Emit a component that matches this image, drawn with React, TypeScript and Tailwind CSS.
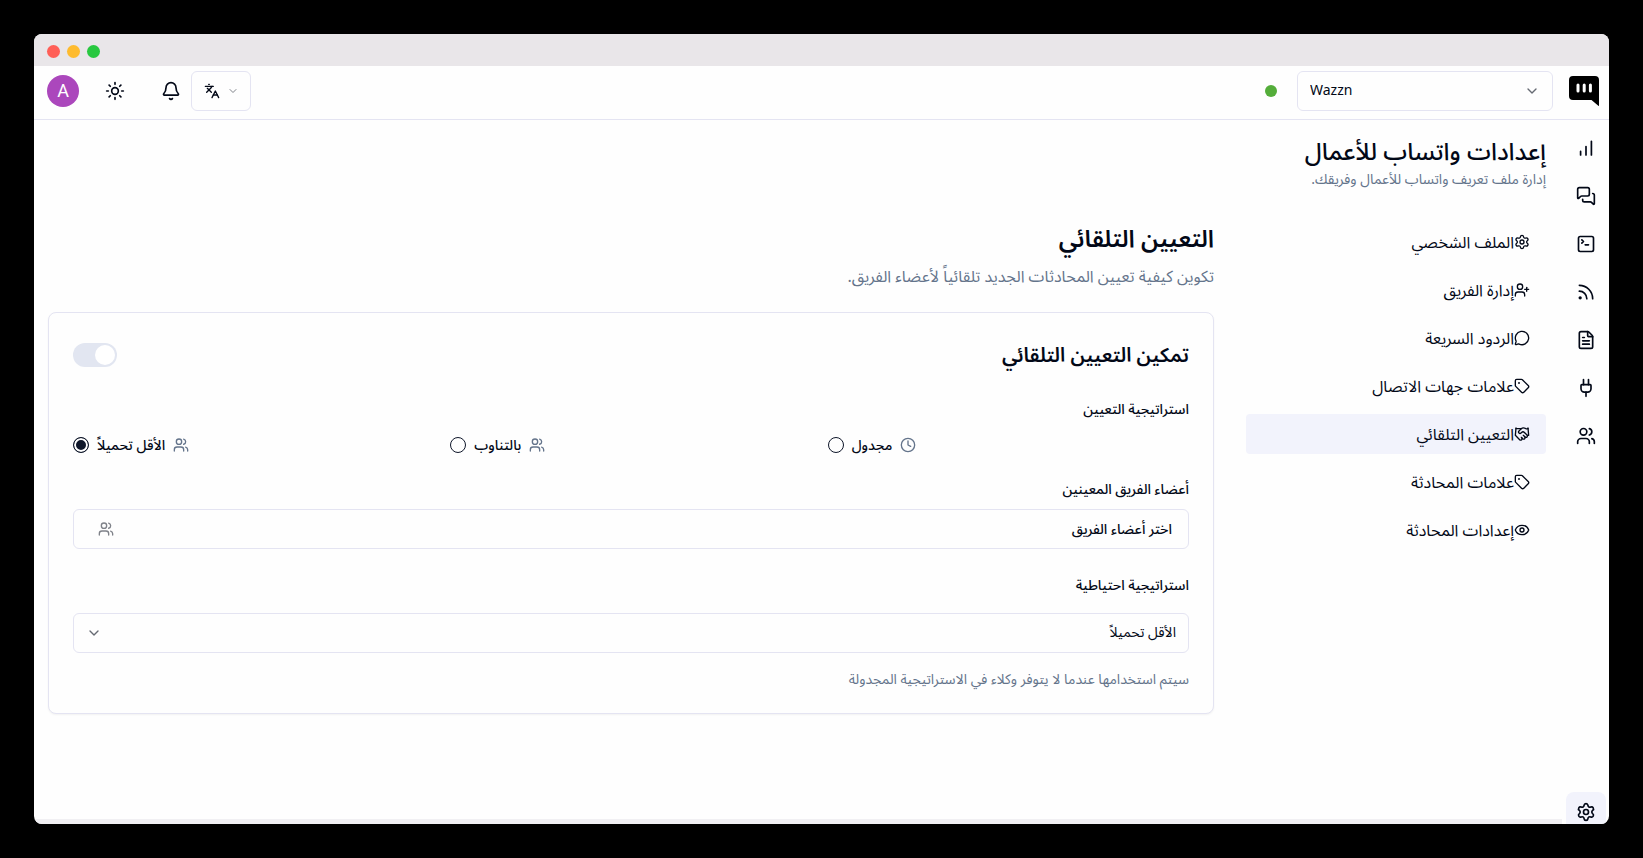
import type { ReactNode } from "react";
import {
  Bell,
  ChevronDown,
  Clock,
  Eye,
  FileText,
  Handshake,
  Languages,
  MessageCircle,
  MessagesSquare,
  Plug,
  Rss,
  Settings,
  SquareTerminal,
  Sun,
  Tag,
  UserPlus,
  Users,
} from "lucide-react";

function BarsIcon({ className }: { className?: string }) {
  return (
    <svg
      viewBox="0 0 20 20"
      className={className}
      fill="none"
      stroke="currentColor"
      strokeWidth="1.7"
      strokeLinecap="round"
      aria-hidden="true"
    >
      <path d="M4.600 13.400v3.500M10 8.600v8.300M15.400 3.300v13.600" />
    </svg>
  );
}

const railItems = [
  { icon: BarsIcon, label: "التحليلات" },
  { icon: MessagesSquare, label: "المحادثات" },
  { icon: SquareTerminal, label: "الأوامر" },
  { icon: Rss, label: "البث" },
  { icon: FileText, label: "القوالب" },
  { icon: Plug, label: "التكاملات" },
  { icon: Users, label: "جهات الاتصال" },
];

const navItems = [
  { icon: Settings, label: "الملف الشخصي" },
  { icon: UserPlus, label: "إدارة الفريق" },
  { icon: MessageCircle, label: "الردود السريعة" },
  { icon: Tag, label: "علامات جهات الاتصال" },
  { icon: Handshake, label: "التعيين التلقائي", active: true },
  { icon: Tag, label: "علامات المحادثة" },
  { icon: Eye, label: "إعدادات المحادثة" },
];

const strategies = [
  { id: "schedule", icon: Clock, label: "مجدول" },
  { id: "round-robin", icon: Users, label: "بالتناوب" },
  { id: "least-loaded", icon: Users, label: "الأقل تحميلاً" },
];

function Logo() {
  return (
    <svg viewBox="0 0 30 30" className="size-[30px]" role="img" aria-label="Wazzn">
      <path d="M4 0H26a4 4 0 0 1 4 4V29.5q0 .8-.7.3L22.500 24H4a4 4 0 0 1-4-4V4a4 4 0 0 1 4-4Z" fill="#000" />
      <path d="M9 9v6M15.200 9v6M21.400 9v6" stroke="#fff" strokeWidth="3" strokeLinecap="round" />
    </svg>
  );
}

function SectionLabel({ children, htmlFor, id }: { children: ReactNode; htmlFor?: string; id?: string }) {
  return (
    <label id={id} htmlFor={htmlFor} className="block text-sm leading-5 font-medium">
      {children}
    </label>
  );
}

function TopBar() {
  return (
    <header className="flex h-[54px] shrink-0 items-start justify-between border-b border-[#e4e4f2] pt-[5px] pr-[10px] pl-[13px]">
      <div className="flex h-10 items-center">
        <Logo />
        <div dir="ltr" className="relative mr-4 w-64">
          <select
            aria-label="Workspace"
            className="h-10 w-full appearance-none rounded-md border border-[#e4e4f2] bg-[#fefefe] px-3 pb-0.5 text-sm"
          >
            <option>Wazzn</option>
          </select>
          <ChevronDown className="pointer-events-none absolute top-3 right-[13px] size-4 opacity-60" />
        </div>
        <span className="mr-5 size-3 rounded-full bg-[#54ad3a]" />
      </div>
      <div className="flex h-10 items-center">
        <button
          type="button"
          aria-label="اللغة"
          className="flex h-10 w-[60px] items-center justify-between rounded-md border border-[#e4e4f2] pr-[11px] pl-3"
          dir="ltr"
        >
          <Languages className="size-4" />
          <ChevronDown className="size-3 opacity-50" />
        </button>
        <button type="button" aria-label="الإشعارات" className="flex h-10 w-10 items-center justify-center">
          <Bell className="size-5" />
        </button>
        <button type="button" aria-label="المظهر" className="mr-4 flex h-10 w-10 items-center justify-center">
          <Sun className="size-5" />
        </button>
        <button
          type="button"
          aria-label="الحساب"
          className="mr-4 flex size-8 items-center justify-center rounded-full bg-[#ab47bc] font-['Roboto',sans-serif] text-lg font-normal text-white"
        >
          A
        </button>
      </div>
    </header>
  );
}

function Rail() {
  return (
    <nav aria-label="القائمة الرئيسية" className="flex w-[47px] shrink-0 flex-col items-center gap-2 pt-2">
      {railItems.map(({ icon: Icon, label }) => (
        <a key={label} href="#" aria-label={label} className="flex size-10 shrink-0 items-center justify-center rounded-lg">
          <Icon className="size-5" />
        </a>
      ))}
      <a
        href="#"
        aria-label="الإعدادات"
        className="mt-auto -mb-2 flex size-10 shrink-0 items-center justify-center rounded-lg bg-[#f2f3fc]"
      >
        <Settings className="size-5" />
      </a>
    </nav>
  );
}

function SettingsNav() {
  return (
    <nav aria-label="الإعدادات" className="flex w-[300px] shrink-0 flex-col gap-2">
      {navItems.map(({ icon: Icon, label, active }) => (
        <a
          key={label}
          href="#"
          className={
            active
              ? "flex h-10 items-center rounded-sm bg-[#f2f3fc] px-4 text-base"
              : "flex h-10 items-center rounded-sm px-4 text-base"
          }
        >
          <Icon className="size-4" />
          {label}
        </a>
      ))}
    </nav>
  );
}

function AssignmentCard() {
  return (
    <div className="mt-6 rounded-lg border border-[#e4e4f2] bg-[#fefefe] p-6 shadow-xs">
      <div className="flex items-center justify-between pt-1">
        <h3 className="text-xl leading-7 font-semibold">تمكين التعيين التلقائي</h3>
        <button
          type="button"
          role="switch"
          aria-checked="false"
          aria-label="تمكين التعيين التلقائي"
          className="flex h-6 w-11 items-center rounded-full bg-[#e2e6f1] p-[2px]"
        >
          <span className="size-5 rounded-full bg-white" />
        </button>
      </div>

      <div className="mt-[30px]">
        <SectionLabel id="strategy-label">استراتيجية التعيين</SectionLabel>
        <div role="radiogroup" aria-labelledby="strategy-label" className="mt-4 grid grid-cols-3 gap-4">
          {strategies.map(({ id, icon: Icon, label }) => (
            <div key={id} dir="ltr" className="flex h-5 items-center gap-2">
              <input
                id={id}
                type="radio"
                name="strategy"
                defaultChecked={id === "least-loaded"}
                className="size-4 appearance-none rounded-full border border-[#0f172a] checked:bg-[#0f172a] checked:shadow-[inset_0_0_0_2px_white]"
              />
              <label htmlFor={id} className="flex items-center gap-2 text-sm font-medium">
                <span dir="rtl">{label}</span>
                <Icon className="size-4 text-[#64748b]" />
              </label>
            </div>
          ))}
        </div>
      </div>

      <div className="mt-6">
        <SectionLabel id="members-label">أعضاء الفريق المعينين</SectionLabel>
        <button
          type="button"
          aria-describedby="members-label"
          className="mt-[10px] flex h-10 w-full items-center justify-between rounded-md border border-[#e4e4f2] pr-4 pl-6 text-sm font-medium"
        >
          اختر أعضاء الفريق
          <Users className="size-4 opacity-50" />
        </button>
      </div>

      <div className="mt-[26px]">
        <SectionLabel htmlFor="fallback">استراتيجية احتياطية</SectionLabel>
        <div className="relative mt-[18px]">
          <select
            id="fallback"
            className="block h-10 w-full appearance-none rounded-md border border-[#e4e4f2] bg-[#fefefe] px-3 pb-0.5 text-sm"
          >
            <option>الأقل تحميلاً</option>
          </select>
          <ChevronDown className="pointer-events-none absolute top-3 left-[13px] size-4 opacity-60" />
        </div>
        <p className="mt-4 text-sm leading-5 text-[#64748b]">
          سيتم استخدامها عندما لا يتوفر وكلاء في الاستراتيجية المجدولة
        </p>
      </div>
    </div>
  );
}

export default function App() {
  return (
    <div
      dir="rtl"
      className="flex h-screen flex-col bg-black p-[34px] font-['Noto_Sans','Noto_Sans_Arabic',sans-serif] text-[#020817]"
    >
      <div className="flex min-h-0 flex-1 flex-col overflow-hidden rounded-lg bg-[#fefefe]">
        <div dir="ltr" className="flex h-8 shrink-0 items-center gap-[7px] bg-[#e9e6e9] px-[13px] pt-0.5">
          <span className="size-[13px] rounded-full bg-[#ff5f57]" />
          <span className="size-[13px] rounded-full bg-[#febb2e]" />
          <span className="size-[13px] rounded-full bg-[#28c840]" />
        </div>
        <TopBar />
        <div className="flex min-h-0 flex-1">
          <Rail />
          <div className="flex min-w-0 flex-1 flex-col">
            <main className="min-h-0 flex-1 pt-[15px] pr-4 pl-[14px]">
              <h1 className="text-2xl leading-8 font-medium">إعدادات واتساب للأعمال</h1>
              <p className="mt-px text-sm leading-[22px] text-[#64748b]">إدارة ملف تعريف واتساب للأعمال وفريقك.</p>
              <div className="mt-8 flex items-start gap-8">
                <SettingsNav />
                <section className="min-w-0 flex-1">
                  <h2 className="text-2xl leading-8 font-semibold">التعيين التلقائي</h2>
                  <p className="mt-[10px] text-base leading-6 text-[#64748b]">
                    تكوين كيفية تعيين المحادثات الجديد تلقائياً لأعضاء الفريق.
                  </p>
                  <AssignmentCard />
                </section>
              </div>
            </main>
            <div className="h-[5px] shrink-0 bg-[#f1f0f3]" />
          </div>
        </div>
      </div>
    </div>
  );
}
